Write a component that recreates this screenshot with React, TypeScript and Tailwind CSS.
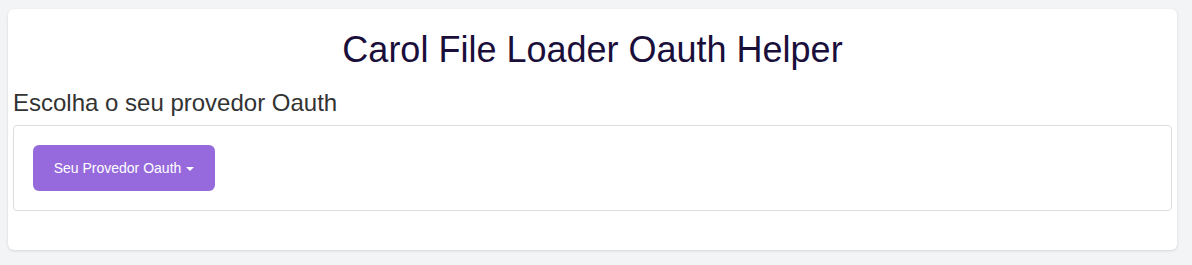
export default function App() {
  return (
    <div className="min-h-[265px] bg-[#f3f4f6] pl-2 pt-[9px] font-['Liberation_Sans',Arial,sans-serif]">
      <div className="w-[1169px] h-[241px] rounded-md bg-white px-[5px] shadow-[0_1px_3px_rgba(0,0,0,0.12)]">
        <h1 className="pt-[16px] text-center text-[36px] leading-[50px] text-[#1a0f3a]">
          Carol File Loader Oauth Helper
        </h1>
        <h3 className="mt-[14px] text-[24px] leading-[28px] text-[#333]">Escolha o seu provedor Oauth</h3>
        <div className="mt-[8px] h-[86px] rounded border border-[#ddd] p-[19px]">
          <button className="flex h-[46px] w-[182px] items-center justify-center gap-[5px] rounded-md bg-[#966add] text-[14px] text-white">
            Seu Provedor Oauth
            <span className="mt-[1px] h-0 w-0 border-x-[4px] border-t-[4px] border-x-transparent border-t-white" />
          </button>
        </div>
      </div>
    </div>
  )
}
